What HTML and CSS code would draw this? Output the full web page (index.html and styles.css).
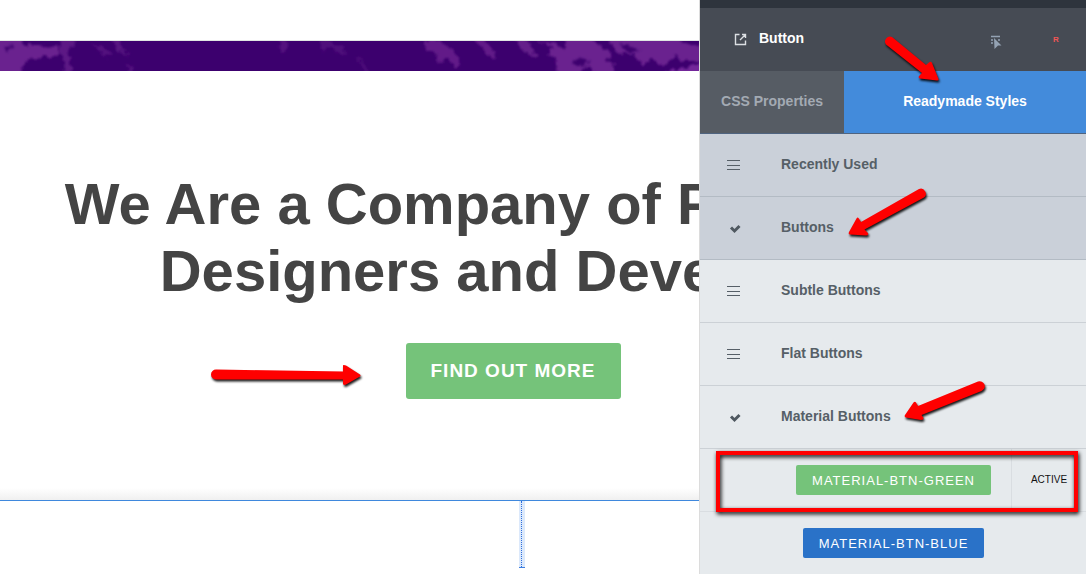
FILE: index.html
```html
<!DOCTYPE html>
<html lang="en">
<head>
    <meta charset="UTF-8">
    <meta name="viewport" content="width=device-width, initial-scale=1.0">
    <title>Readymade Styles</title>
    <link rel="stylesheet" href="styles.css">
</head>
<body>
    <main class="canvas">
        <div class="site">
            <div class="banner">
                <svg width="700" height="30" viewBox="0 0 700 30" aria-hidden="true">
                    <defs>
                        <filter id="rough" x="-20" y="-20" width="740" height="70" filterUnits="userSpaceOnUse">
                            <feTurbulence type="fractalNoise" baseFrequency="0.2" numOctaves="2" seed="4"/>
                            <feDisplacementMap in="SourceGraphic" scale="9" xChannelSelector="R" yChannelSelector="G"/>
                            <feGaussianBlur stdDeviation="0.8"/>
                        </filter>
                    </defs>
                    <g filter="url(#rough)" fill="#6b238f">
                        <path d="M-18 -16H24L22 5L34 3L47 6L58 5L60 12L52 17L43 13L38 19L29 18L24 22L19 48H-18z"/>
                        <path d="M60 -4L74 -4L76 4L66 8L70 18L72 34L65 34L64 20L60 12z" opacity=".7"/>
                        <path d="M92 3L100 5L112 12L106 16L99 10z" opacity=".5"/>
                        <path d="M110 -4L120 -4L122 5L129 17L124 14L116 6z" opacity=".6"/>
                        <path d="M126 22L132 26L134 34L128 30z" opacity=".5"/>
                        <path d="M278 -3L286 -2L287 8L283 13L280 4z" opacity=".5"/>
                        <path d="M320 -3L330 0L333 4L344 5L345 14L337 10L326 6L324 14z" opacity=".4"/>
                        <path d="M357 15L364 22L370 33L366 32z" opacity=".4"/>
                        <path d="M424 0L436 -3L447 5L456 12L460 24L456 26L445 17L440 22L436 13L426 8z" opacity=".8"/>
                        <path d="M474 -4L482 -4L494 10L496 18L486 12z" opacity=".8"/>
                        <path d="M512 -4L524 -3L532 6L539 17L534 16L522 10z" opacity=".85"/>
                        <path d="M538 0L551 6L549 14L558 22L555 40L575 40L586 25L604 38L616 28L606 18L614 14L596 2L580 -8L564 -8L566 7L552 2z"/>
                        <path d="M597 -16H718V20L680 20L676 14L662 26L652 17L644 24L632 12L620 14z"/>
                        <path d="M656 34L680 27L718 18V48H656z" fill="#73279a"/>
                    </g>
                    <g filter="url(#rough)" fill="#3c006e">
                        <path d="M572 20L584 16L590 20L582 25L574 24z"/>
                        <path d="M666 -8L714 -8V4L688 3z"/>
                        <path d="M620 3L630 5L640 10L628 11z"/>
                        <path d="M4 6L12 4L13 7L6 9z"/>
                    </g>
                </svg>
            </div>

            <section class="hero">
                <h1>We Are a Company of Passionate<br>Designers and Developers</h1>
                <button type="button" class="hero-btn">FIND OUT MORE</button>
                <svg class="arrow arrow-hero" width="160" height="30" viewBox="0 0 160 30" aria-hidden="true">
                    <path d="M6 9.500L133 11.500V5.200Q134 4.500 136 5.500L150 14.500Q151 15.500 150 16.500L136 24.500Q134 25.500 133 24V19.500L6 19.500A5 5 0 0 1 6 9.500z"/>
                </svg>
            </section>

            <section class="columns">
                <div class="column"></div>
                <div class="handle"></div>
                <div class="column"></div>
            </section>
        </div>
    </main>

    <aside class="panel">
        <header class="panel-header">
            <svg width="13" height="13" viewBox="0 0 13 13" aria-hidden="true">
                <path d="M5.500 1.500H1.500V11.500H11.500V7.500M8 1.500H11.500V5M11.500 1.500L6 7" fill="none" stroke="#dcdfe3" stroke-width="1.400"/>
            </svg>
            <h2>Button</h2>
            <svg class="pick" width="12" height="14" viewBox="0 0 12 14" aria-hidden="true">
                <path d="M1 1.500H10M1 5H3M8 5H10M1 8H3" stroke="#94a2b3" stroke-width="1.400"/>
                <path d="M4 3L11.500 10.500H8L4.500 14z" fill="#94a2b3"/>
            </svg>
            <span class="badge">R</span>
        </header>

        <nav class="tabs">
            <button type="button">CSS Properties</button>
            <button type="button" class="active">Readymade Styles</button>
        </nav>

        <ul class="groups">
            <li class="group top">
                <svg width="14" height="11" viewBox="0 0 14 11" aria-hidden="true"><path class="bars" d="M0 0.500H13M0 5.500H13M0 9.500H13"/></svg>
                <a href="#">Recently Used</a>
            </li>
            <li class="group top">
                <svg width="14" height="11" viewBox="0 0 14 11" aria-hidden="true"><path class="tick" d="M4 4.500L7.500 8L12.500 3"/></svg>
                <a href="#">Buttons</a>
            </li>
            <li class="group">
                <svg width="14" height="11" viewBox="0 0 14 11" aria-hidden="true"><path class="bars" d="M0 0.500H13M0 5.500H13M0 9.500H13"/></svg>
                <a href="#">Subtle Buttons</a>
            </li>
            <li class="group">
                <svg width="14" height="11" viewBox="0 0 14 11" aria-hidden="true"><path class="bars" d="M0 0.500H13M0 5.500H13M0 9.500H13"/></svg>
                <a href="#">Flat Buttons</a>
            </li>
            <li class="group">
                <svg width="14" height="11" viewBox="0 0 14 11" aria-hidden="true"><path class="tick" d="M4 4.500L7.500 8L12.500 3"/></svg>
                <a href="#">Material Buttons</a>
            </li>
            <li class="style selected">
                <div class="preview"><button type="button" class="material green">MATERIAL-BTN-GREEN</button></div>
                <span class="state">ACTIVE</span>
            </li>
            <li class="style">
                <div class="preview"><button type="button" class="material blue">MATERIAL-BTN-BLUE</button></div>
            </li>
        </ul>

        <svg class="arrow arrow-panel" width="386" height="440" viewBox="0 0 386 440" aria-hidden="true">
            <path d="M192 37L226 65L229 62.500Q231 61 232 63L238.500 79Q239 80.500 237 80.500L220 78.500Q218 78 219 76L222 73L186 44.500A5 5 0 0 1 192 37z"/>
            <path d="M219 189L161 222L158.500 218Q157.500 217 156.500 218.500L149 232Q148 234 150 234.500L166 235.500Q169 235 168 233L164.500 229.500L224 197.500A5 5 0 0 0 219 189z"/>
            <path d="M278 381.500L218 406L216 402.500Q215 401 213.500 402.500L205 415Q204 417 206 417.500L221 420Q224 420 223.500 418L221.500 415L281.500 391A5 5 0 0 0 278 381.500z"/>
        </svg>
    </aside>
</body>
</html>
```

FILE: styles.css
```css
* {
    box-sizing: border-box;
}

body {
    margin: 0;
    display: flex;
    height: 100vh;
    overflow: hidden;
    font-family: "Liberation Sans", Arial, sans-serif;
    background: #fff;
}

button {
    border: none;
    margin: 0;
    font-family: inherit;
    cursor: pointer;
}

/* page being edited */
.canvas {
    flex: 1;
    min-width: 0;
    overflow: hidden;
}

.site {
    width: 1044px;
    padding-top: 40px;
}

.banner {
    height: 31px;
    border-top: 1px solid #dfe6e2;
    background: #3c006e;
}

.banner svg {
    display: block;
}

.hero {
    position: relative;
    height: 430px;
    padding-top: 99px;
    border-bottom: 1px solid #3f88dd;
    background: linear-gradient(#fff 417px, #f0f0f0);
    text-align: center;
}

.hero h1 {
    margin: 0 0 39px;
    padding-left: 4px;
    color: #444;
    font-size: 58px;
    line-height: 67px;
    white-space: nowrap;
}

.hero-btn {
    height: 56px;
    margin-right: 18px;
    padding: 0 25px;
    border-radius: 3px;
    background: #75c37a;
    color: #fff;
    font-size: 19px;
    font-weight: bold;
    letter-spacing: 1px;
}

.columns {
    display: grid;
    grid-template-columns: 1fr 6px 1fr;
    height: 67px;
}

.handle {
    padding-left: 2px;
    border-bottom: 1px dashed #3f7fe0;
    background: #dce9fb;
}

.handle::before {
    content: "";
    display: block;
    height: 100%;
    border-left: 1px dotted #2f6fdc;
}

/* style panel */
.panel {
    position: relative;
    flex: 0 0 386px;
    border-top: 8px solid #2e343d;
    background: #e6eaed;
    box-shadow: -1px 0 0 #dcdcdc;
}

.panel-header {
    display: flex;
    align-items: center;
    height: 63px;
    padding: 0 26px 0 34px;
    background: #464b54;
}

.panel-header h2 {
    flex: 1;
    margin: 0 0 3px 12px;
    color: #fff;
    font-size: 14px;
}

.pick {
    margin-top: 4px;
}

.badge {
    width: 7px;
    margin-left: 51px;
    color: #f05555;
    font-size: 8px;
    font-weight: bold;
}

.tabs {
    display: flex;
    height: 63px;
    border-bottom: 1px solid #4f6480;
}

.tabs button {
    flex: 0 0 144px;
    padding: 0 0 2px;
    background: #565c64;
    color: #a3aab3;
    font-size: 14px;
    font-weight: bold;
}

.tabs .active {
    flex: 1;
    background: #438bdb;
    color: #fff;
}

.groups {
    margin: 0;
    padding: 0;
    list-style: none;
}

.group {
    display: flex;
    align-items: center;
    gap: 40px;
    height: 63px;
    padding-left: 27px;
    border-bottom: 1px solid #ccd1d6;
}

.group.top {
    border-color: #b3bbc4;
    background: #cad0d9;
}

.group a {
    margin-bottom: 2px;
    color: #565f67;
    font-size: 14px;
    font-weight: bold;
    text-decoration: none;
}

.bars {
    stroke: #565f67;
}

.tick {
    fill: none;
    stroke: #4f5860;
    stroke-width: 3;
}

.style {
    position: relative;
    display: flex;
    height: 63px;
    border-bottom: 1px solid #d9dde1;
}

.preview {
    display: flex;
    flex: 1;
    align-items: center;
    justify-content: center;
    margin: 0 74px 0 75px;
}

.selected .preview {
    justify-content: flex-end;
    margin-right: 20px;
}

.material {
    height: 30px;
    padding: 0 16px;
    border-radius: 2px;
    color: #fff;
    font-size: 13px;
    letter-spacing: 1px;
}

.green {
    background: #75c37a;
}

.blue {
    background: #2a72c8;
}

.state {
    flex: 0 0 75px;
    border-left: 1px solid #d9dde1;
    color: #111;
    font-size: 10px;
    line-height: 61px;
    text-align: center;
}

/* callouts */
.selected::after {
    content: "";
    position: absolute;
    inset: 2px 8px -1px 16px;
    border: 4px solid #f00;
    filter: drop-shadow(1px 2px 2px #000);
}

.arrow {
    position: absolute;
    overflow: visible;
    fill: #f00;
    pointer-events: none;
    filter: drop-shadow(1px 2px 1px rgba(0, 0, 0, .9));
}

.arrow-hero {
    top: 289px;
    left: 210px;
}

.arrow-panel {
    top: -8px;
    left: 0;
}
```
